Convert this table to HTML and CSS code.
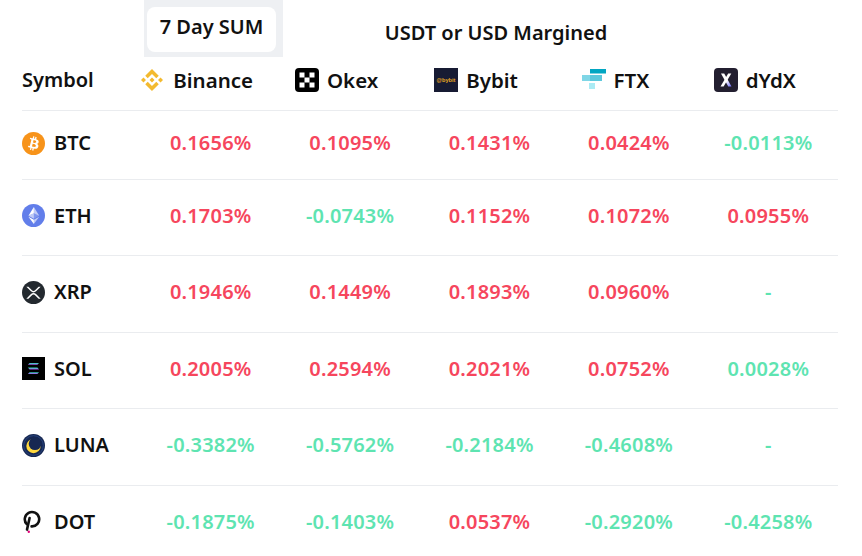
FILE: index.html
```html
<!DOCTYPE html>
<html>
<head>
<meta charset="utf-8">
<link rel="stylesheet" href="styles.css">
</head>
<body>
<div class="page">
  <div class="top">
    <div class="top-spacer"></div>
    <div class="sum-tab"><div class="sum-pill">7 Day SUM</div></div>
    <div class="margin-title">USDT or USD Margined</div>
  </div>

  <div class="row head">
    <div class="cell sym">Symbol</div>
    <div class="cell ex">
      <svg class="ic-binance" viewBox="0 0 126.61 126.61"><path fill="#f3ba2f" d="M38.73 53.2l24.59-24.58 24.6 24.6 14.3-14.31L63.32 0 24.43 38.9zM0 63.31l14.3-14.31 14.31 14.31-14.31 14.3zM38.73 73.41l24.59 24.59 24.6-24.6 14.31 14.29-38.9 38.91-38.91-38.88zM98 63.31l14.3-14.31 14.31 14.3-14.31 14.32zM77.83 63.3L63.32 48.78 48.81 63.29l14.51 14.5z"/></svg>
      <span>Binance</span>
    </div>
    <div class="cell ex">
      <svg class="ic-ex" viewBox="0 0 24 24"><rect width="24" height="24" rx="4" fill="#000"/><g fill="#fff"><rect x="4.5" y="4.5" width="5" height="5"/><rect x="14.5" y="4.5" width="5" height="5"/><rect x="9.5" y="9.5" width="5" height="5"/><rect x="4.5" y="14.5" width="5" height="5"/><rect x="14.5" y="14.5" width="5" height="5"/></g></svg>
      <span>Okex</span>
    </div>
    <div class="cell ex">
      <svg class="ic-ex" viewBox="0 0 24 24"><rect width="24" height="24" fill="#171b33"/><text x="12" y="14" text-anchor="middle" font-family="Liberation Sans, sans-serif" font-size="5.6" font-weight="700" fill="#e8a820">@bybit</text></svg>
      <span>Bybit</span>
    </div>
    <div class="cell ex">
      <svg class="ic-ex" viewBox="0 0 24 22"><rect x="8" y="0" width="16" height="4.5" fill="#02a6c2"/><rect x="0" y="6" width="8" height="6" fill="#7fd6e6"/><rect x="8" y="6" width="12" height="6" fill="#5cc8dc"/><rect x="7" y="14" width="6" height="6" fill="#abebf4"/></svg>
      <span>FTX</span>
    </div>
    <div class="cell ex">
      <svg class="ic-ex" viewBox="0 0 24 24"><defs><linearGradient id="dg" x1="0" y1="0" x2="1" y2="1"><stop offset="0" stop-color="#ffffff"/><stop offset="0.55" stop-color="#ffffff"/><stop offset="1" stop-color="#6966ff"/></linearGradient></defs><rect width="24" height="24" rx="4" fill="#231f30"/><path d="M7 5.5h3.2L17.5 18.5h-3.2z" fill="url(#dg)"/><path d="M14.2 5.5h3.1L9.6 18.5H6.5z" fill="#fff"/></svg>
      <span>dYdX</span>
    </div>
  </div>

  <div class="row first">
    <div class="cell sym">
      <svg class="coin" viewBox="0 0 32 32"><circle cx="16" cy="16" r="16" fill="#f7931a"/><path fill="#fff" d="M23.189 14.02c.314-2.096-1.283-3.223-3.465-3.975l.708-2.84-1.728-.43-.69 2.765c-.454-.114-.92-.22-1.385-.326l.695-2.783L15.596 6l-.708 2.839c-.376-.086-.746-.17-1.104-.26l.002-.009-2.384-.595-.46 1.846s1.283.294 1.256.312c.7.175.826.638.805 1.006l-.806 3.235c.048.012.11.03.18.057l-.183-.045-1.13 4.532c-.086.212-.303.531-.793.41.018.025-1.256-.313-1.256-.313l-.858 1.978 2.25.561c.418.105.828.215 1.231.318l-.715 2.872 1.727.43.708-2.84c.472.127.93.245 1.378.357l-.706 2.828 1.728.43.715-2.866c2.948.558 5.164.333 6.097-2.333.752-2.146-.037-3.385-1.588-4.192 1.13-.26 1.980-1.003 2.207-2.538zm-3.95 5.538c-.533 2.147-4.148.986-5.32.695l.95-3.805c1.172.293 4.929.872 4.37 3.11zm.535-5.569c-.487 1.953-3.495.96-4.470.717l.86-3.45c.975.243 4.118.696 3.61 2.733z"/></svg>
      <span>BTC</span>
    </div>
    <div class="cell num up">0.1656%</div>
    <div class="cell num up">0.1095%</div>
    <div class="cell num up">0.1431%</div>
    <div class="cell num up">0.0424%</div>
    <div class="cell num down">-0.0113%</div>
  </div>

  <div class="row">
    <div class="cell sym">
      <svg class="coin" viewBox="0 0 32 32"><circle cx="16" cy="16" r="16" fill="#627eea"/><g fill="#fff"><path fill-opacity=".602" d="M16.498 4v8.87l7.497 3.35z"/><path d="M16.498 4L9 16.22l7.498-3.35z"/><path fill-opacity=".602" d="M16.498 21.968v6.027L24 17.616z"/><path d="M16.498 27.995v-6.028L9 17.616z"/><path fill-opacity=".2" d="M16.498 20.573l7.497-4.353-7.497-3.348z"/><path fill-opacity=".602" d="M9 16.22l7.498 4.353v-7.701z"/></g></svg>
      <span>ETH</span>
    </div>
    <div class="cell num up">0.1703%</div>
    <div class="cell num down">-0.0743%</div>
    <div class="cell num up">0.1152%</div>
    <div class="cell num up">0.1072%</div>
    <div class="cell num up">0.0955%</div>
  </div>

  <div class="row">
    <div class="cell sym">
      <svg class="coin" viewBox="0 0 32 32"><circle cx="16" cy="16" r="16" fill="#23292f"/><path fill="#fff" d="M23.07 8h2.89l-6.015 5.957a5.621 5.621 0 01-7.89 0L6.035 8H8.93l4.57 4.523a3.556 3.556 0 004.996 0L23.07 8zM8.895 24.563H6l6.055-5.993a5.621 5.621 0 017.890 0L26 24.562h-2.895L18.5 20a3.556 3.556 0 00-4.996 0l-4.61 4.563z"/></svg>
      <span>XRP</span>
    </div>
    <div class="cell num up">0.1946%</div>
    <div class="cell num up">0.1449%</div>
    <div class="cell num up">0.1893%</div>
    <div class="cell num up">0.0960%</div>
    <div class="cell num down">-</div>
  </div>

  <div class="row">
    <div class="cell sym">
      <svg class="coin" viewBox="0 0 23 23"><defs><linearGradient id="sg" x1="0" y1="0" x2="0" y2="1"><stop offset="0" stop-color="#22e0b0"/><stop offset="0.5" stop-color="#6f9fd8"/><stop offset="1" stop-color="#b04ef0"/></linearGradient></defs><rect width="23" height="23" fill="#000"/><g fill="url(#sg)"><path d="M7.5 6h9.5l-1.6 1.8H5.9z"/><path d="M5.9 10.6h9.5l1.6 1.8H7.5z"/><path d="M7.5 15.2h9.5l-1.6 1.8H5.9z"/></g></svg>
      <span>SOL</span>
    </div>
    <div class="cell num up">0.2005%</div>
    <div class="cell num up">0.2594%</div>
    <div class="cell num up">0.2021%</div>
    <div class="cell num up">0.0752%</div>
    <div class="cell num down">0.0028%</div>
  </div>

  <div class="row">
    <div class="cell sym">
      <svg class="coin" viewBox="0 0 24 24"><circle cx="12" cy="12" r="12" fill="#172852"/><circle cx="12" cy="12.5" r="7.5" fill="#ffd83d"/><circle cx="13.6" cy="10.2" r="6.6" fill="#172852"/><circle cx="12" cy="12" r="10.3" fill="none" stroke="#2a4a8a" stroke-width="0.8"/></svg>
      <span>LUNA</span>
    </div>
    <div class="cell num down">-0.3382%</div>
    <div class="cell num down">-0.5762%</div>
    <div class="cell num down">-0.2184%</div>
    <div class="cell num down">-0.4608%</div>
    <div class="cell num down">-</div>
  </div>

  <div class="row">
    <div class="cell sym">
      <svg class="coin dot" viewBox="0 0 23 23"><path d="M4.8 14.2A7.2 7.2 0 1 1 9.6 16.4" fill="none" stroke="#111" stroke-width="2.6" stroke-linecap="round"/><path d="M7.6 8L5 19.6" fill="none" stroke="#111" stroke-width="2.6" stroke-linecap="round"/><circle cx="6.8" cy="21.8" r="1.2" fill="#e6007a"/></svg>
      <span>DOT</span>
    </div>
    <div class="cell num down">-0.1875%</div>
    <div class="cell num down">-0.1403%</div>
    <div class="cell num up">0.0537%</div>
    <div class="cell num down">-0.2920%</div>
    <div class="cell num down">-0.4258%</div>
  </div>
</div>
</body>
</html>
```
FILE: styles.css
```css
* { box-sizing: border-box; }
html, body { margin: 0; padding: 0; background: #fff; }
body {
  font-family: "Noto Sans", "Open Sans", sans-serif;
  font-weight: 600;
  color: #111;
}
.page {
  width: 816px;
  margin-left: 22px;
}
.top {
  display: grid;
  grid-template-columns: 122px 139px 1fr;
  height: 57px;
}
.sum-tab {
  background: #eef0f3;
  padding: 7px 7px 5px 3px;
}
.sum-pill {
  background: #fff;
  border-radius: 8px;
  height: 45px;
  display: flex;
  align-items: center;
  justify-content: center;
  padding-bottom: 5px;
  font-size: 20px;
  line-height: 24px;
}
.margin-title {
  text-align: center;
  padding: 21px 129px 0 0;
  font-size: 20px;
  line-height: 24px;
}
.row {
  display: grid;
  grid-template-columns: 119px repeat(5, 1fr);
  border-bottom: 1px solid #eaecef;
  padding: 23.7px 0 27.8px;
}
.row.head { padding: 11px 0 18px; }
.row.first { padding: 20.3px 0 23.7px; }
.cell {
  height: 24px;
  line-height: 24px;
  display: flex;
  align-items: center;
}
.head .cell { font-size: 20.5px; }
.cell.ex {
  justify-content: center;
  gap: 8px;
  padding-right: 27px;
}
.ic-binance { width: 22px; height: 22px; margin-right: 2px; }
.ic-ex { width: 24px; height: 24px; }
.cell.sym { gap: 9px; font-size: 20px; }
.coin { width: 23px; height: 23px; flex: none; }
.cell.num {
  justify-content: center;
  font-size: 20px;
  letter-spacing: 0.2px;
}
.up { color: #f6465d; }
.down { color: #5ee4b1; }
```
